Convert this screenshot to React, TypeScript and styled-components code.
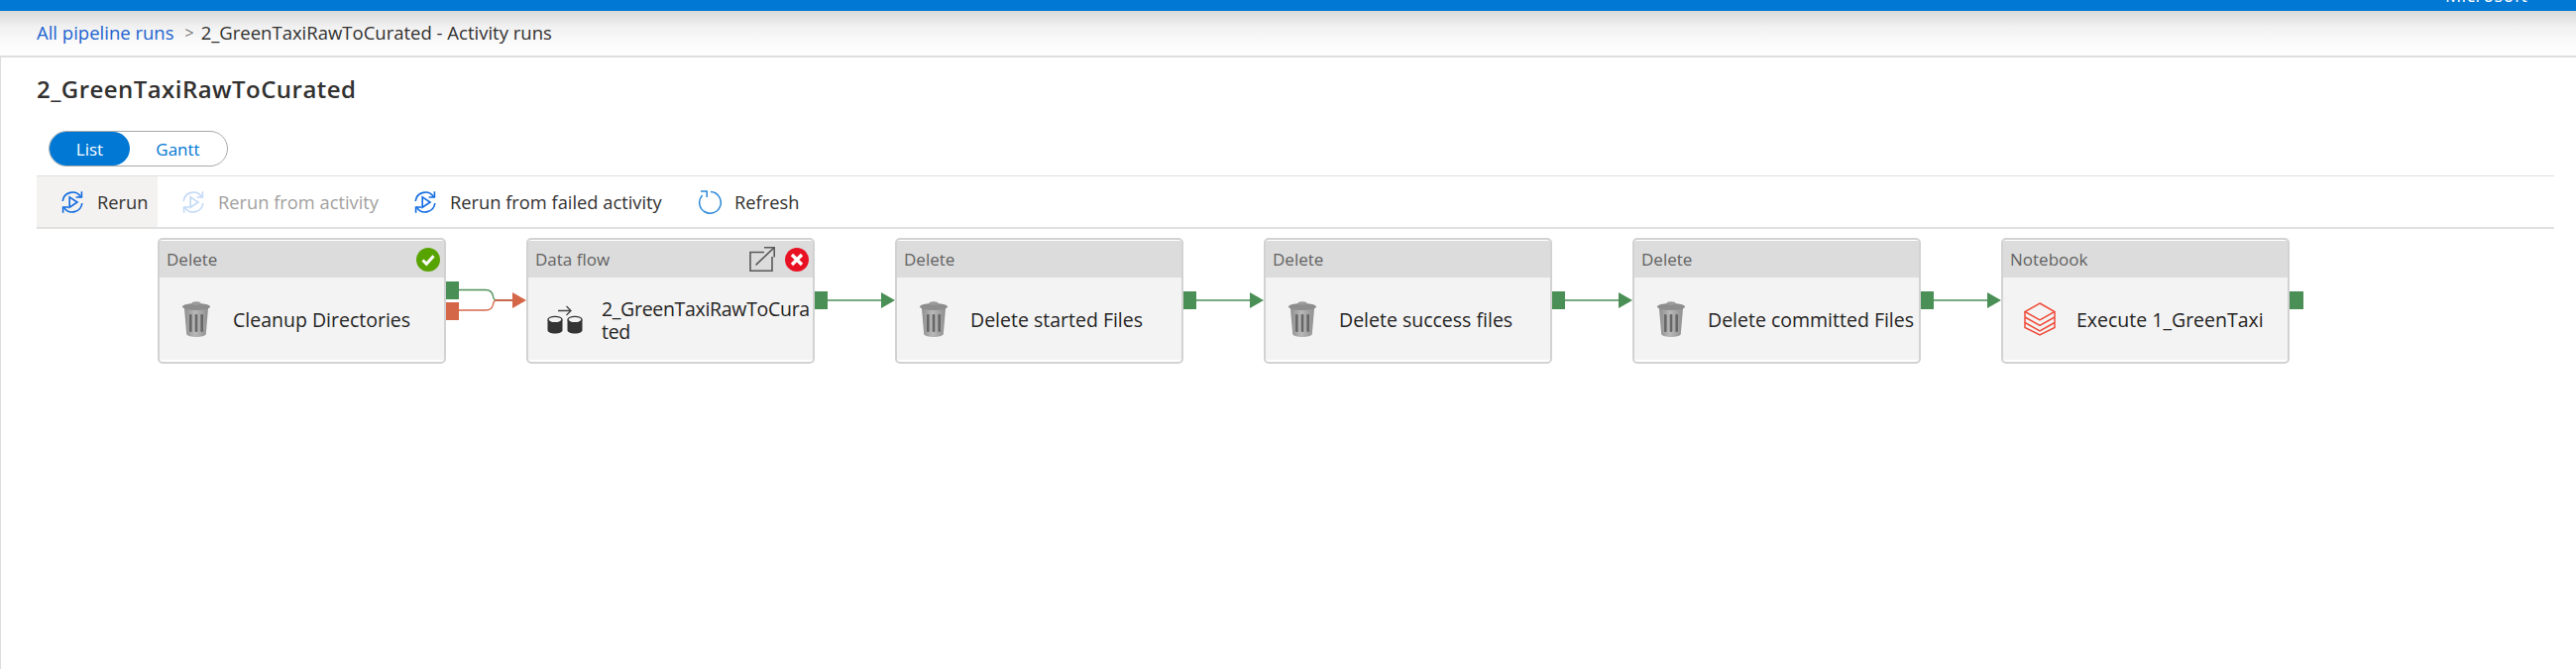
import React from "react";
import styled, { createGlobalStyle } from "styled-components";

const Global = createGlobalStyle`
  html, body { margin: 0; padding: 0; background: #fff; }
  body { font-family: "Open Sans", "Noto Sans", "Liberation Sans", sans-serif; overflow: hidden; }
`;

const Page = styled.div`
  height: 675px;
  display: flex;
  flex-direction: column;
  overflow: hidden;
`;
const TopBar = styled.header`
  height: 11px;
  flex: none;
  background: #0078d4;
  display: flex;
  justify-content: flex-end;
  align-items: flex-end;
  padding: 0 49px 8px 0;
  box-sizing: border-box;
  overflow: hidden;
`;
const TenantName = styled.span`
  color: #fff;
  font-size: 18px;
  line-height: 16px;
  letter-spacing: 0.4px;
  flex: none;
`;
const Breadcrumb = styled.nav`
  height: 47px;
  flex: none;
  box-sizing: border-box;
  border-bottom: 2px solid #dedede;
  background: linear-gradient(#d9d9d9 0, #f1f1f1 35%, #fcfcfc 75%, #fdfdfd 100%);
  display: flex;
  align-items: center;
  padding: 0 0 2px 37px;
  font-size: 18.5px;
`;
const Crumb = styled.a`
  color: #1c63cf;
`;
const Sep = styled.span`
  color: #777;
  margin: 0 7px 0 11px;
  font-size: 16px;
`;
const Current = styled.span`
  color: #323130;
`;
const Main = styled.main`
  flex: 1;
  border-left: 1px solid #dcdcdc;
  padding: 0 22px 0 36px;
  display: flex;
  flex-direction: column;
  min-height: 0;
`;
const Title = styled.h1`
  margin: 16px 0 0;
  height: 32px;
  line-height: 32px;
  font-size: 24px;
  font-weight: 600;
  color: #323130;
  letter-spacing: 0.45px;
`;
const Toggle = styled.div`
  margin: 26px 0 0 12px;
  width: 181px;
  height: 36px;
  box-sizing: border-box;
  border: 1px solid #a9a9a9;
  border-radius: 18px;
  display: flex;
  align-items: stretch;
  font-size: 17px;
`;
const ToggleItem = styled.div<{ $active?: boolean }>`
  width: 81px;
  box-sizing: border-box;
  border-radius: 17px;
  display: flex;
  align-items: center;
  justify-content: center;
  background: ${(p) => (p.$active ? "#0078d4" : "transparent")};
  color: ${(p) => (p.$active ? "#fff" : "#0078d4")};
  padding-left: ${(p) => (p.$active ? 0 : "16px")};
`;
const Toolbar = styled.div`
  margin-top: 9px;
  height: 54px;
  flex: none;
  box-sizing: border-box;
  border-top: 1px solid #e0e0e0;
  border-bottom: 2px solid #e0e0e0;
  display: flex;
  align-items: stretch;
`;
const ToolButton = styled.button<{ $hover?: boolean; $width: number }>`
  all: unset;
  box-sizing: border-box;
  width: ${(p) => p.$width}px;
  padding-left: 24px;
  display: flex;
  align-items: center;
  gap: 13px;
  font-size: 18.3px;
  color: ${(p) => (p.disabled ? "#a19f9d" : "#323130")};
  background: ${(p) => (p.$hover ? "#f3f2f1" : "transparent")};
  white-space: nowrap;
`;
const Canvas = styled.section`
  padding: 9px 0 0 122px;
  display: flex;
  align-items: flex-start;
`;
const Node = styled.article`
  width: 291px;
  height: 127px;
  flex: none;
  box-sizing: border-box;
  border: 2px solid #d2d2d2;
  border-radius: 5px;
  background: #fff;
  padding: 1px 0 2px;
  display: flex;
  flex-direction: column;
  overflow: hidden;
`;
const NodeHeader = styled.div`
  height: 37px;
  flex: none;
  background: #dcdcdc;
  display: flex;
  align-items: center;
  padding: 0 4px 0 7px;
  font-size: 17px;
  color: #626262;
`;
const NodeType = styled.span`
  flex: 1;
`;
const NodeActions = styled.span`
  display: flex;
  align-items: center;
  gap: 10px;
`;
const NodeBody = styled.div`
  flex: 1;
  background: #f3f3f3;
  display: flex;
  align-items: center;
`;
const IconSlot = styled.div`
  width: 74px;
  flex: none;
  display: flex;
  justify-content: center;
`;
const NodeName = styled.div<{ $tight?: boolean }>`
  width: 213px;
  flex: none;
  font-size: 19.5px;
  line-height: 23px;
  letter-spacing: ${(p) => (p.$tight ? "-0.3px" : "0")};
  color: #252423;
  word-break: break-all;
  margin-top: 2px;
`;
const ConnectorSvg = styled.svg`
  width: 81px;
  height: 127px;
  flex: none;
  display: block;
`;

const BLUE = "#0f6adf";
const RerunIcon = ({ faded }: { faded?: boolean }) => (
  <svg width="24" height="24" viewBox="0 0 24 24" fill="none" stroke={BLUE} strokeWidth="1.6" opacity={faded ? 0.25 : 1} style={{ flex: "none" }}>
    <path d="M2.2 11A10 10 0 0 1 20.5 6.6" />
    <path d="M21.8 13A10 10 0 0 1 3.5 17.4" />
    <path d="M21.4 1.2V7h-5.8" />
    <path d="M2.6 22.8V17h5.8" />
    <path d="M9.2 6.8 17 12l-7.8 5.2z" />
  </svg>
);
const RefreshIcon = () => (
  <svg width="24" height="24" viewBox="0 0 24 24" fill="none" stroke="#2b88d8" strokeWidth="1.5" style={{ flex: "none" }}>
    <path d="M13 1.6A10.8 10.8 0 1 1 4.6 5" />
    <path d="M3 .9h6.2v6.2" />
  </svg>
);
const Trash = () => (
  <svg width="28" height="36" viewBox="0 0 28 36" style={{ display: "block" }}>
    <defs>
      <linearGradient id="tb" x1="0" x2="1" y1="0" y2="0">
        <stop offset="0" stopColor="#8e8e8e" />
        <stop offset="0.45" stopColor="#b8b8b8" />
        <stop offset="1" stopColor="#8f8f8f" />
      </linearGradient>
    </defs>
    <path d="M2 7h24l-2.2 26c-.2 2-5 3-9.800 3s-9.600-1-9.800-3z" fill="url(#tb)" />
    <ellipse cx="14" cy="5.500" rx="14" ry="3.500" fill="#8d8d8d" />
    <ellipse cx="14" cy="2" rx="4.500" ry="1.800" fill="#9a9a9a" />
    <rect x="7" y="13" width="2.600" height="18" rx="1.200" fill="#676767" />
    <rect x="12.700" y="13" width="2.600" height="18" rx="1.200" fill="#676767" />
    <rect x="18.400" y="13" width="2.600" height="18" rx="1.200" fill="#676767" />
  </svg>
);
const DataFlowIcon = () => (
  <svg width="37" height="30" viewBox="0 0 37 30" fill="none" style={{ display: "block" }}>
    <path d="M11 6.500h13M19.500 2l4.500 4.500-4.500 4.500" stroke="#444" strokeWidth="1.300" />
    <path d="M.5 15.500v10.500c0 2 3 3.500 7.500 3.500s7.500-1.500 7.500-3.500V15.500z" fill="#333" />
    <ellipse cx="8" cy="15.500" rx="7" ry="3.200" fill="#f3f3f3" stroke="#333" strokeWidth="1.300" />
    <path d="M20.500 15.500v10.500c0 2 3 3.500 7.500 3.500s7.500-1.500 7.500-3.500V15.500z" fill="#333" />
    <ellipse cx="28" cy="15.500" rx="7" ry="3.200" fill="#f3f3f3" stroke="#333" strokeWidth="1.300" />
  </svg>
);
const StackIcon = () => (
  <svg width="32" height="34" viewBox="0 0 32 34" fill="none" stroke="#ef4b3a" strokeWidth="1.500" style={{ display: "block" }}>
    <path d="M16 1 31 9.500 16 18 1 9.500z" />
    <path d="M1 10v5l15 8.500L31 15v-5" />
    <path d="M1 15.500v5L16 29l15-8.500v-5" />
    <path d="M1 21v4.500L16 33l15-7.500V21" />
  </svg>
);
const SuccessBadge = () => (
  <svg width="24" height="24" viewBox="0 0 24 24" style={{ display: "block" }}>
    <circle cx="12" cy="12" r="12" fill="#57a300" />
    <path d="M6.500 12.500l3.800 3.800 7.200-8" fill="none" stroke="#fff" strokeWidth="3" />
  </svg>
);
const ErrorBadge = () => (
  <svg width="24" height="24" viewBox="0 0 24 24" style={{ display: "block" }}>
    <circle cx="12" cy="12" r="12" fill="#e81123" />
    <path d="M7 7l10 10M17 7 7 17" fill="none" stroke="#fff" strokeWidth="3.400" />
  </svg>
);
const OpenIcon = () => (
  <svg width="26" height="25" viewBox="0 0 26 25" fill="none" stroke="#595959" strokeWidth="1.600" style={{ display: "block" }}>
    <path d="M15 5.500H1V24.200H23V10" />
    <path d="M6.500 18.500 25 .8" />
    <path d="M15 .8h10.200V10.500" />
  </svg>
);

const GREEN = "#4a8f55";
const ORANGE = "#d46748";
const Connector = () => (
  <ConnectorSvg viewBox="0 0 81 127">
    <rect x="0" y="54" width="13" height="18" fill={GREEN} />
    <path d="M13 63H68" stroke={GREEN} strokeWidth="1.500" fill="none" />
    <path d="M67 55 81 63 67 71z" fill={GREEN} />
  </ConnectorSvg>
);
const EndPort = () => (
  <ConnectorSvg viewBox="0 0 81 127">
    <rect x="0" y="54" width="14" height="18" fill={GREEN} />
  </ConnectorSvg>
);
const Branch = () => (
  <ConnectorSvg viewBox="0 0 81 127">
    <rect x="0" y="44" width="13" height="18" fill={GREEN} />
    <rect x="0" y="65" width="13" height="18" fill={ORANGE} />
    <path d="M13 52.500H40C46 52.500 47 56 47.500 59S49 63 51 63" stroke={GREEN} strokeWidth="1.300" fill="none" />
    <path d="M13 73H40C46 73 47 70 47.500 67S49 63 51 63" stroke={ORANGE} strokeWidth="1.300" fill="none" />
    <path d="M50 63H68" stroke="#c4694a" strokeWidth="2" fill="none" />
    <path d="M67 55 81 63 67 71z" fill={ORANGE} />
  </ConnectorSvg>
);

type Activity = {
  type: string;
  name: string;
  icon: React.ReactNode;
  actions?: React.ReactNode;
  after: React.ReactNode;
  tight?: boolean;
};

const activities: Activity[] = [
  { type: "Delete", name: "Cleanup Directories", icon: <Trash />, actions: <SuccessBadge />, after: <Branch /> },
  {
    type: "Data flow",
    name: "2_GreenTaxiRawToCurated",
    tight: true,
    icon: <DataFlowIcon />,
    actions: (
      <>
        <OpenIcon />
        <ErrorBadge />
      </>
    ),
    after: <Connector />,
  },
  { type: "Delete", name: "Delete started Files", icon: <Trash />, after: <Connector /> },
  { type: "Delete", name: "Delete success files", icon: <Trash />, after: <Connector /> },
  { type: "Delete", name: "Delete committed Files", icon: <Trash />, after: <Connector /> },
  { type: "Notebook", name: "Execute 1_GreenTaxi", icon: <StackIcon />, after: <EndPort /> },
];

export default function App() {
  return (
    <Page>
      <Global />
      <TopBar>
        <TenantName>Microsoft</TenantName>
      </TopBar>
      <Breadcrumb>
        <Crumb>All pipeline runs</Crumb>
        <Sep>&gt;</Sep>
        <Current>2_GreenTaxiRawToCurated - Activity runs</Current>
      </Breadcrumb>
      <Main>
        <Title>2_GreenTaxiRawToCurated</Title>
        <Toggle>
          <ToggleItem $active>List</ToggleItem>
          <ToggleItem>Gantt</ToggleItem>
        </Toggle>
        <Toolbar>
          <ToolButton $hover $width={122}>
            <RerunIcon />
            Rerun
          </ToolButton>
          <ToolButton disabled $width={234}>
            <RerunIcon faded />
            Rerun from activity
          </ToolButton>
          <ToolButton $width={287}>
            <RerunIcon />
            Rerun from failed activity
          </ToolButton>
          <ToolButton $width={140}>
            <RefreshIcon />
            Refresh
          </ToolButton>
        </Toolbar>
        <Canvas>
          {activities.map((a) => (
            <React.Fragment key={a.name}>
              <Node>
                <NodeHeader>
                  <NodeType>{a.type}</NodeType>
                  {a.actions && <NodeActions>{a.actions}</NodeActions>}
                </NodeHeader>
                <NodeBody>
                  <IconSlot>{a.icon}</IconSlot>
                  <NodeName $tight={a.tight}>{a.name}</NodeName>
                </NodeBody>
              </Node>
              {a.after}
            </React.Fragment>
          ))}
        </Canvas>
      </Main>
    </Page>
  );
}
